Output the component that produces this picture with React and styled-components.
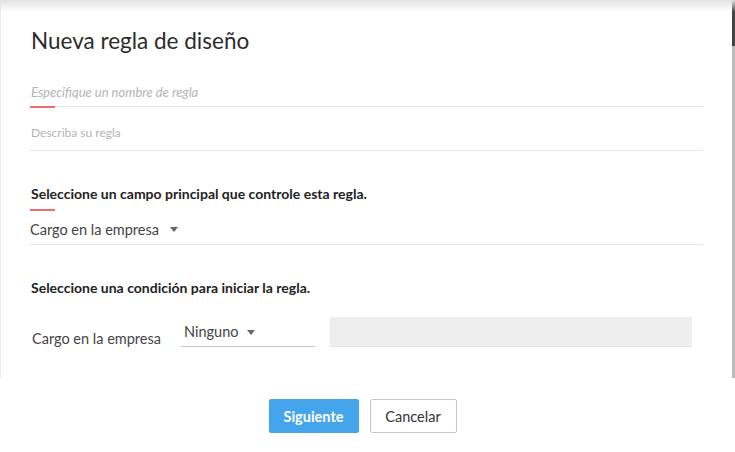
import React from "react";
import styled, { createGlobalStyle } from "styled-components";

const Global = createGlobalStyle`
  html, body { margin: 0; padding: 0; background: #fff; }
  body { font-family: "Lato", "Open Sans", sans-serif; color: #333; }
`;

const Modal = styled.div`
  width: 735px;
  height: 452px;
  display: flex;
  flex-direction: column;
  position: relative;
  background: #fff;
  overflow: hidden;
`;

const TopShade = styled.div`
  position: absolute;
  left: 0;
  right: 0;
  top: 0;
  height: 12px;
  background: linear-gradient(#e2e2e2, rgba(255, 255, 255, 0));
  pointer-events: none;
`;

const Body = styled.div`
  height: 378px;
  box-sizing: border-box;
  border-left: 1px solid #ececec;
  padding: 28px 32px 0 29px;
  position: relative;
`;

const Scrollbar = styled.div`
  position: absolute;
  right: 0;
  top: 0;
  width: 3px;
  height: 378px;
  background: #b9b9b9;
  &::before {
    content: "";
    display: block;
    height: 46px;
    background: #444;
  }
`;

const Title = styled.h1`
  margin: 0 0 0 1px;
  font-size: 22.5px;
  font-weight: 400;
  color: #2b2b2b;
  line-height: 26px;
`;

const Field = styled.div`
  position: relative;
  border-bottom: 1px solid #e6e6e6;
  height: ${(p) => p.$h}px;
  margin-top: ${(p) => p.$mt}px;
  display: flex;
  align-items: flex-end;
  padding-bottom: ${(p) => p.$pb}px;
  box-sizing: border-box;
`;

const Placeholder = styled.span`
  font-size: ${(p) => (p.$italic ? 13 : 12)}px;
  line-height: 16px;
  color: #b3b3b3;
  font-style: ${(p) => (p.$italic ? "italic" : "normal")};
  padding-left: 1px;
`;

const RedMark = styled.div`
  position: absolute;
  left: 0;
  bottom: -2px;
  width: 25px;
  height: 2px;
  background: #ef6c6c;
`;

const Heading = styled.h2`
  margin: ${(p) => p.$mt}px 0 0 1px;
  font-size: 14px;
  font-weight: 700;
  color: #222;
  line-height: 16px;
`;

const HeadMark = styled.div`
  width: 25px;
  height: 2px;
  background: #ef6c6c;
  margin-top: 7px;
`;

const SelectLine = styled.div`
  border-bottom: 1px solid #e6e6e6;
  height: 34px;
  display: flex;
  align-items: center;
  gap: 11px;
  box-sizing: border-box;
  padding-top: 3px;
`;

const SelectText = styled.span`
  font-size: 14.5px;
  line-height: 17px;
  color: #444;
`;

const Caret = styled.span`
  width: 0;
  height: 0;
  border-left: 4.5px solid transparent;
  border-right: 4.5px solid transparent;
  border-top: 5px solid #666;
  margin-top: 1px;
`;

const CondRow = styled.div`
  display: flex;
  align-items: flex-end;
  margin-top: 21px;
  height: 30px;
`;

const CondLabel = styled.span`
  width: 151px;
  flex: none;
  box-sizing: border-box;
  font-size: 14.5px;
  color: #444;
  padding-left: 2px;
  line-height: 17px;
`;

const CondSelect = styled.div`
  width: 134px;
  height: 30px;
  flex: none;
  border-bottom: 1px solid #c8c8c8;
  display: flex;
  align-items: center;
  gap: 9px;
  padding-left: 3px;
  box-sizing: border-box;
`;

const ValueBox = styled.div`
  width: 362px;
  height: 30px;
  flex: none;
  margin-left: 15px;
  background: #eeeeee;
  border-bottom: 1px solid #e2e2e2;
  box-sizing: border-box;
`;

const Footer = styled.div`
  flex: 1;
  display: flex;
  justify-content: center;
  gap: 11px;
  padding-top: 21px;
  padding-right: 10px;
  box-sizing: border-box;
`;

const Button = styled.button`
  height: 34px;
  width: ${(p) => p.$w}px;
  box-sizing: border-box;
  border-radius: 2px;
  font-family: "Lato", "Open Sans", sans-serif;
  font-size: 14.5px;
  font-weight: ${(p) => (p.$primary ? 700 : 400)};
  color: ${(p) => (p.$primary ? "#fff" : "#333")};
  background: ${(p) => (p.$primary ? "#45a5ec" : "#fff")};
  border: 1px solid ${(p) => (p.$primary ? "#45a5ec" : "#c6c6c6")};
  padding: 0;
  cursor: pointer;
`;

export default function App() {
  return (
    <Modal>
      <Global />
      <Body>
        <Title>Nueva regla de diseño</Title>
        <Field $h={37} $mt={16} $pb={6}>
          <Placeholder $italic>Especifique un nombre de regla</Placeholder>
          <RedMark />
        </Field>
        <Field $h={44} $mt={0} $pb={9}>
          <Placeholder>Describa su regla</Placeholder>
        </Field>
        <Heading $mt={35}>Seleccione un campo principal que controle esta regla.</Heading>
        <HeadMark />
        <SelectLine>
          <SelectText>Cargo en la empresa</SelectText>
          <Caret />
        </SelectLine>
        <Heading $mt={35}>Seleccione una condición para iniciar la regla.</Heading>
        <CondRow>
          <CondLabel>Cargo en la empresa</CondLabel>
          <CondSelect>
            <SelectText>Ninguno</SelectText>
            <Caret />
          </CondSelect>
          <ValueBox />
        </CondRow>
        <Scrollbar />
      </Body>
      <Footer>
        <Button $primary $w={90}>Siguiente</Button>
        <Button $w={87}>Cancelar</Button>
      </Footer>
      <TopShade />
    </Modal>
  );
}
